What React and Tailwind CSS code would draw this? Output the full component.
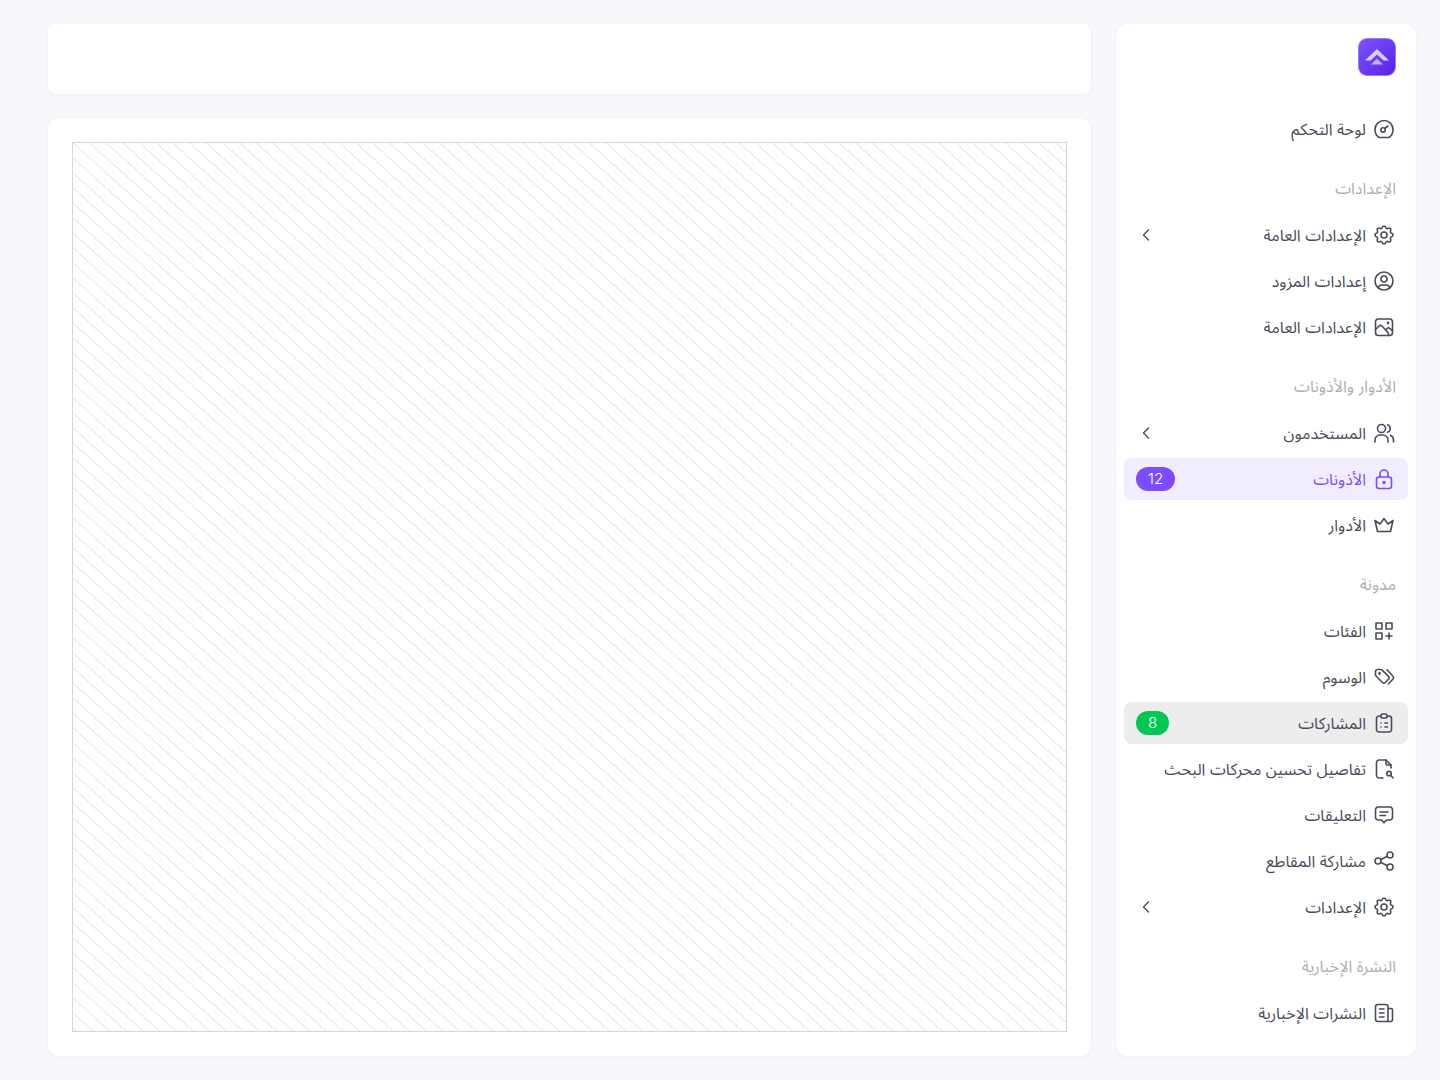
import React from 'react';
import { ChevronLeft } from 'lucide-react';
import { TbSettings, TbUserCircle, TbCategoryPlus, TbShare } from 'react-icons/tb';

// icons that react-icons doesn't have in this shape
function Svg({ children }) {
  return (
    <svg
      width="24"
      height="24"
      viewBox="0 0 24 24"
      fill="none"
      stroke="currentColor"
      strokeWidth="1.6"
      strokeLinecap="round"
      strokeLinejoin="round"
      className="shrink-0"
    >
      {children}
    </svg>
  );
}

const GaugeIcon = () => (
  <Svg>
    <path d="M7 20.500h10c2.500-1.600 4-4.500 4-8a9 9 0 0 0-18 0c0 3.500 1.500 6.400 4 8z" />
    <circle cx="11" cy="13" r="2.200" />
    <path d="M12.800 11.500 16 9" />
  </Svg>
);

const PictureIcon = () => (
  <Svg>
    <rect x="3.500" y="4" width="17" height="16.500" rx="3" />
    <path d="M3.500 14.500 7 11c1-.9 2-.9 3 0l6 6.500 .8 3" />
    <path d="M13.500 15l1.500-1.500c1-.9 2-.9 3 0l2.500 2.500" />
    <circle cx="16" cy="8" r=".6" fill="currentColor" />
  </Svg>
);

const UsersIcon = () => (
  <Svg>
    <circle cx="9.500" cy="7.500" r="4" />
    <path d="M3 21v-2a5 5 0 0 1 5-5h3a5 5 0 0 1 5 5v2" />
    <path d="M15.500 3.700a4 4 0 0 1 0 7.600" />
    <path d="M18.500 14.300a5 5 0 0 1 3 4.700v2" />
  </Svg>
);

const LockIcon = () => (
  <Svg>
    <rect x="4.500" y="10" width="15" height="11.500" rx="2.500" />
    <path d="M8 10V7a4 4 0 0 1 8 0v3" />
    <circle cx="12" cy="15.500" r="1" fill="currentColor" />
  </Svg>
);

const CrownIcon = () => (
  <Svg>
    <path d="M5.500 18.500h13l2.500-11-5 3.500-4-5.500-4 5.500-5-3.500z" />
  </Svg>
);

const TagsIcon = () => (
  <Svg>
    <path d="M3.500 9.500V6.500a2 2 0 0 1 2-2h3.200c.6 0 1.100.2 1.500.6l6.300 6.300a2 2 0 0 1 0 2.800l-3.300 3.300a2 2 0 0 1-2.800 0L4.100 11c-.4-.4-.6-.9-.6-1.500z" />
    <path d="M15 4.800l6 6.400c.7.800.7 2 0 2.800l-4.500 4.800" />
    <circle cx="7.500" cy="8.500" r=".6" fill="currentColor" />
  </Svg>
);

const ClipboardIcon = () => (
  <Svg>
    <path d="M9 5H7a2.500 2.500 0 0 0-2.500 2.500v11A2.500 2.500 0 0 0 7 21h10a2.500 2.500 0 0 0 2.500-2.500v-11A2.500 2.500 0 0 0 17 5h-2" />
    <rect x="9" y="3" width="6" height="4" rx="1.800" />
    <path d="M9 12h.01M9 16h.01M13 12h2.500M13 16h2.500" />
  </Svg>
);

const FileSearchIcon = () => (
  <Svg>
    <path d="M14 3v4a1 1 0 0 0 1 1h4" />
    <path d="M11 21H7a2.500 2.500 0 0 1-2.500-2.500v-13A2.500 2.500 0 0 1 7 3h7l5 5v3" />
    <circle cx="17" cy="16.500" r="2.300" />
    <path d="m19 18.500 2 2.500" />
  </Svg>
);

const CommentIcon = () => (
  <Svg>
    <path d="M6.500 4h11A3 3 0 0 1 20.500 7v7a3 3 0 0 1-3 3h-3l-2.500 2.800L9.500 17h-3a3 3 0 0 1-3-3V7a3 3 0 0 1 3-3z" />
    <path d="M8 9h8M8 12.500h5.500" />
  </Svg>
);

const NewsIcon = () => (
  <Svg>
    <path d="M16 20.500H6a2.500 2.500 0 0 1-2.500-2.500V6A2.500 2.500 0 0 1 6 3.500h7.500A2.500 2.500 0 0 1 16 6v14.500z" />
    <path d="M16 7.500h3a1.500 1.500 0 0 1 1.500 1.500v9.500a2 2 0 0 1-2 2H16" />
    <path d="M7.500 8h4.500M7.500 12h4.500M7.500 16h4.500" />
  </Svg>
);

const sections = [
  {
    items: [{ icon: GaugeIcon, label: 'لوحة التحكم' }],
  },
  {
    title: 'الإعدادات',
    items: [
      { icon: TbSettings, label: 'الإعدادات العامة', arrow: true },
      { icon: TbUserCircle, label: 'إعدادات المزود' },
      { icon: PictureIcon, label: 'الإعدادات العامة' },
    ],
  },
  {
    title: 'الأدوار والأذونات',
    items: [
      { icon: UsersIcon, label: 'المستخدمون', arrow: true },
      { icon: LockIcon, label: 'الأذونات', active: 'purple', badge: '12' },
      { icon: CrownIcon, label: 'الأدوار' },
    ],
  },
  {
    title: 'مدونة',
    items: [
      { icon: TbCategoryPlus, label: 'الفئات' },
      { icon: TagsIcon, label: 'الوسوم' },
      { icon: ClipboardIcon, label: 'المشاركات', active: 'gray', badge: '8' },
      { icon: FileSearchIcon, label: 'تفاصيل تحسين محركات البحث' },
      { icon: CommentIcon, label: 'التعليقات' },
      { icon: TbShare, label: 'مشاركة المقاطع' },
      { icon: TbSettings, label: 'الإعدادات', arrow: true },
    ],
  },
  {
    title: 'النشرة الإخبارية',
    items: [{ icon: NewsIcon, label: 'النشرات الإخبارية' }],
  },
];

function NavItem({ item }) {
  const Icon = item.icon;
  let rowClass = 'text-[#4b4b5c]';
  if (item.active === 'purple') rowClass = 'bg-[#f1edff] text-[#7c4dff]';
  if (item.active === 'gray') rowClass = 'bg-[#ededed] text-[#4b4b5c]';

  return (
    <div className={`flex h-[42px] items-center gap-1.5 rounded-lg pl-3 pr-3 ${rowClass}`}>
      <Icon size={24} strokeWidth={1.6} className="shrink-0" />
      <span className="text-base leading-6">{item.label}</span>
      {item.badge && (
        <span
          className={`mr-auto flex h-6 items-center justify-center rounded-full px-3 text-[15px] font-light text-white ${
            item.active === 'purple' ? 'bg-[#7c4dff]' : 'bg-[#00c853]'
          }`}
        >
          {item.badge}
        </span>
      )}
      {item.arrow && <ChevronLeft size={20} strokeWidth={1.6} className="mr-auto" />}
    </div>
  );
}

export default function App() {
  return (
    <div
      dir="rtl"
      className="flex h-[1080px] gap-[25px] bg-[#f7f7fc] pb-6 pl-12 pr-6 pt-6 font-['Inter','Noto_Sans_Arabic','Noto_Sans',sans-serif]"
    >
      {/* sidebar */}
      <aside className="w-[300px] shrink-0 rounded-xl bg-white px-2 pt-[14px] shadow-[0_1px_4px_rgba(60,60,100,0.05)]">
        <div className="mb-8 px-3">
          <div className="flex size-[38px] items-center justify-center rounded-[9px] border border-[#9a7dff] bg-gradient-to-br from-[#7d50ff] to-[#5a1ee6]">
            <svg width="24" height="16" viewBox="0 0 24 16" fill="none">
              <path d="M12 0 24 11.500h-5.500L12 5.500 5.500 11.500H0z" fill="#fff" fillOpacity="0.75" />
              <path d="M12 9.500l6 6H6z" fill="#fff" fillOpacity="0.6" />
            </svg>
          </div>
        </div>
        <nav className="flex flex-col">
          {sections.map((section, i) => (
            <div key={i} className="flex flex-col gap-1">
              {section.title && (
                <div className="mb-[10px] mt-[26px] px-3 text-base leading-6 text-[#aeaeb4]">
                  {section.title}
                </div>
              )}
              {section.items.map((item, j) => (
                <NavItem key={j} item={item} />
              ))}
            </div>
          ))}
        </nav>
      </aside>

      {/* main column */}
      <main className="flex min-w-0 flex-1 flex-col gap-6">
        <div className="h-[70px] rounded-lg bg-white shadow-[0_1px_4px_rgba(60,60,100,0.05)]"></div>
        <div className="flex-1 rounded-xl bg-white p-6 shadow-[0_1px_4px_rgba(60,60,100,0.05)]">
          <div className="h-full border border-[#d6d6d6] bg-[linear-gradient(to_top_right,transparent_47%,#ececec_47%,#ececec_53%,transparent_53%)] bg-[size:16.67px_15px]"></div>
        </div>
      </main>
    </div>
  );
}
